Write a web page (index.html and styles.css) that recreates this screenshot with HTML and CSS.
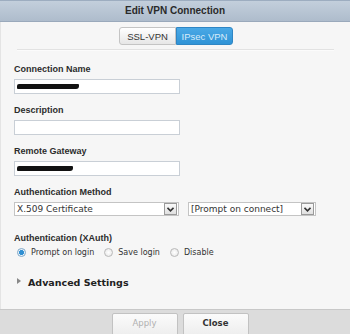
FILE: index.html
```html
<!DOCTYPE html>
<html lang="en">
<head>
    <meta charset="UTF-8">
    <title>Edit VPN Connection</title>
    <link rel="stylesheet" href="styles.css">
</head>
<body>
    <div class="dialog">
        <header class="dialog-header">Edit VPN Connection</header>

        <main class="dialog-body">
            <div class="tabs">
                <button class="tab">SSL-VPN</button>
                <button class="tab active">IPsec VPN</button>
            </div>
            <div class="divider"></div>

            <div class="field">
                <label class="field-label">Connection Name</label>
                <div class="text-input"><span class="redacted wide"></span></div>
            </div>

            <div class="field">
                <label class="field-label">Description</label>
                <div class="text-input"></div>
            </div>

            <div class="field">
                <label class="field-label">Remote Gateway</label>
                <div class="text-input"><span class="redacted"></span></div>
            </div>

            <div class="field">
                <label class="field-label">Authentication Method</label>
                <div class="select-row">
                    <div class="select first">
                        <span class="select-text">X.509 Certificate</span>
                        <span class="select-arrow">
                            <svg width="7" height="5" viewBox="0 0 7 5"><path d="M0.5 0.8 L3.5 3.8 L6.5 0.8" fill="none" stroke="#333" stroke-width="1.6"/></svg>
                        </span>
                    </div>
                    <div class="select second">
                        <span class="select-text">[Prompt on connect]</span>
                        <span class="select-arrow">
                            <svg width="7" height="5" viewBox="0 0 7 5"><path d="M0.5 0.8 L3.5 3.8 L6.5 0.8" fill="none" stroke="#333" stroke-width="1.6"/></svg>
                        </span>
                    </div>
                </div>
            </div>

            <div class="field xauth">
                <label class="field-label">Authentication (XAuth)</label>
                <div class="radio-row">
                    <span class="radio checked"></span><span class="radio-text">Prompt on login</span>
                    <span class="radio"></span><span class="radio-text">Save login</span>
                    <span class="radio"></span><span class="radio-text">Disable</span>
                </div>
            </div>

            <div class="advanced">
                <span class="caret"></span>
                <span class="advanced-title">Advanced Settings</span>
            </div>
        </main>

        <footer class="dialog-footer">
            <button class="footer-button disabled">Apply</button>
            <button class="footer-button">Close</button>
        </footer>
    </div>
</body>
</html>
```

FILE: styles.css
```css
* {
    margin: 0;
    padding: 0;
    box-sizing: border-box;
}

body {
    font-family: 'DejaVu Sans', Verdana, sans-serif;
    background-color: #f6f6f6;
    color: #222;
    width: 350px;
    height: 334px;
    overflow: hidden;
}

.dialog {
    display: flex;
    flex-direction: column;
    height: 334px;
}

/* Header */
.dialog-header {
    height: 22px;
    background: linear-gradient(#c3cfdc, #aebccc);
    border-top: 1px solid #9dadc0;
    border-bottom: 1px solid #9aa9bb;
    font-family: 'Liberation Sans', Arial, sans-serif;
    font-size: 10px;
    font-weight: 700;
    color: #2a2a2a;
    text-align: center;
    line-height: 20px;
}

/* Body */
.dialog-body {
    flex: 1;
    background-color: #f6f6f6;
    border-left: 1px solid #e4e4e4;
    padding: 5px 13px 0 13px;
}

.tabs {
    display: flex;
    justify-content: center;
    margin-left: 1px;
}

.tab {
    width: 57px;
    height: 18px;
    font-family: 'Liberation Sans', Arial, sans-serif;
    font-size: 9.5px;
    color: #333;
    background: linear-gradient(#ffffff, #e6e6e6);
    border: 1px solid #c4c4c4;
    border-radius: 3px 0 0 3px;
}

.tab.active {
    color: #d8ecfa;
    background: linear-gradient(#4aa9e6, #2f93d6);
    border-color: #2f86c4;
    border-radius: 0 3px 3px 0;
}

.divider {
    height: 2px;
    background-color: #e2e2e2;
    border-bottom: 1px solid #fbfbfb;
    margin: 4px 3px 0 3px;
}

.field {
    margin-top: 13px;
}

.field + .field {
    margin-top: 11px;
}

.field + .field.xauth {
    margin-top: 17px;
}

.field-label {
    display: block;
    font-family: 'Liberation Sans', Arial, sans-serif;
    font-size: 9px;
    font-weight: 700;
    color: #2c2c2c;
    height: 11px;
    line-height: 11px;
    margin-bottom: 4px;
}

.text-input {
    width: 166px;
    height: 15px;
    background-color: white;
    border: 1px solid #c9cfd6;
    display: flex;
    align-items: center;
    padding-left: 2px;
}

.redacted {
    display: block;
    width: 56px;
    height: 5px;
    background-color: #111;
    border-radius: 2px 1px 3px 1px;
}

.redacted.wide {
    width: 62px;
}

.select-row {
    display: flex;
    gap: 9px;
}

.select {
    height: 14px;
    background-color: white;
    border: 1px solid #c4c4c4;
    display: flex;
    align-items: center;
    justify-content: space-between;
}

.select.first {
    width: 165px;
}

.select.second {
    width: 128px;
}

.select-text {
    font-size: 9px;
    color: #333;
    padding-left: 2px;
}

.select-arrow {
    width: 13px;
    height: 12px;
    margin-right: 1px;
    border: 1px solid #9a9a9a;
    background: linear-gradient(#fafafa, #e0e0e0);
    display: flex;
    align-items: center;
    justify-content: center;
}

.radio-row {
    display: flex;
    align-items: center;
    padding-left: 3px;
    margin-top: 1px;
}

.radio {
    width: 9px;
    height: 9px;
    border-radius: 50%;
    border: 1px solid #b9b9b9;
    background: radial-gradient(#ffffff, #e4e4e4);
    margin-right: 5px;
}

.radio.checked {
    border-color: #7fa8c8;
    background: radial-gradient(circle, #2f8fd2 0, #2f8fd2 2.2px, #e8f2fa 2.8px);
}

.radio-text {
    font-size: 8px;
    color: #333;
    margin-right: 10px;
}

.advanced {
    display: flex;
    align-items: center;
    margin-top: 20px;
    padding-left: 3px;
}

.caret {
    width: 0;
    height: 0;
    border-top: 3px solid transparent;
    border-bottom: 3px solid transparent;
    border-left: 4px solid #888;
    margin-right: 7px;
    margin-top: -4px;
}

.advanced-title {
    font-size: 9.5px;
    font-weight: 700;
    color: #222;
}

/* Footer */
.dialog-footer {
    height: 25px;
    background-color: #dcdcdc;
    border-top: 1px solid #c8c8c8;
    display: flex;
    justify-content: center;
    gap: 5px;
    padding-top: 3px;
    padding-left: 10px;
}

.footer-button {
    width: 66px;
    height: 24px;
    font-family: 'DejaVu Sans', Verdana, sans-serif;
    font-size: 8.5px;
    font-weight: 700;
    color: #333;
    background: linear-gradient(#fbfbfb, #ededed);
    border: 1px solid #c2c2c2;
    border-radius: 2px;
    padding-bottom: 4px;
}

.footer-button.disabled {
    color: #b0b0b0;
    font-weight: 400;
}
```
